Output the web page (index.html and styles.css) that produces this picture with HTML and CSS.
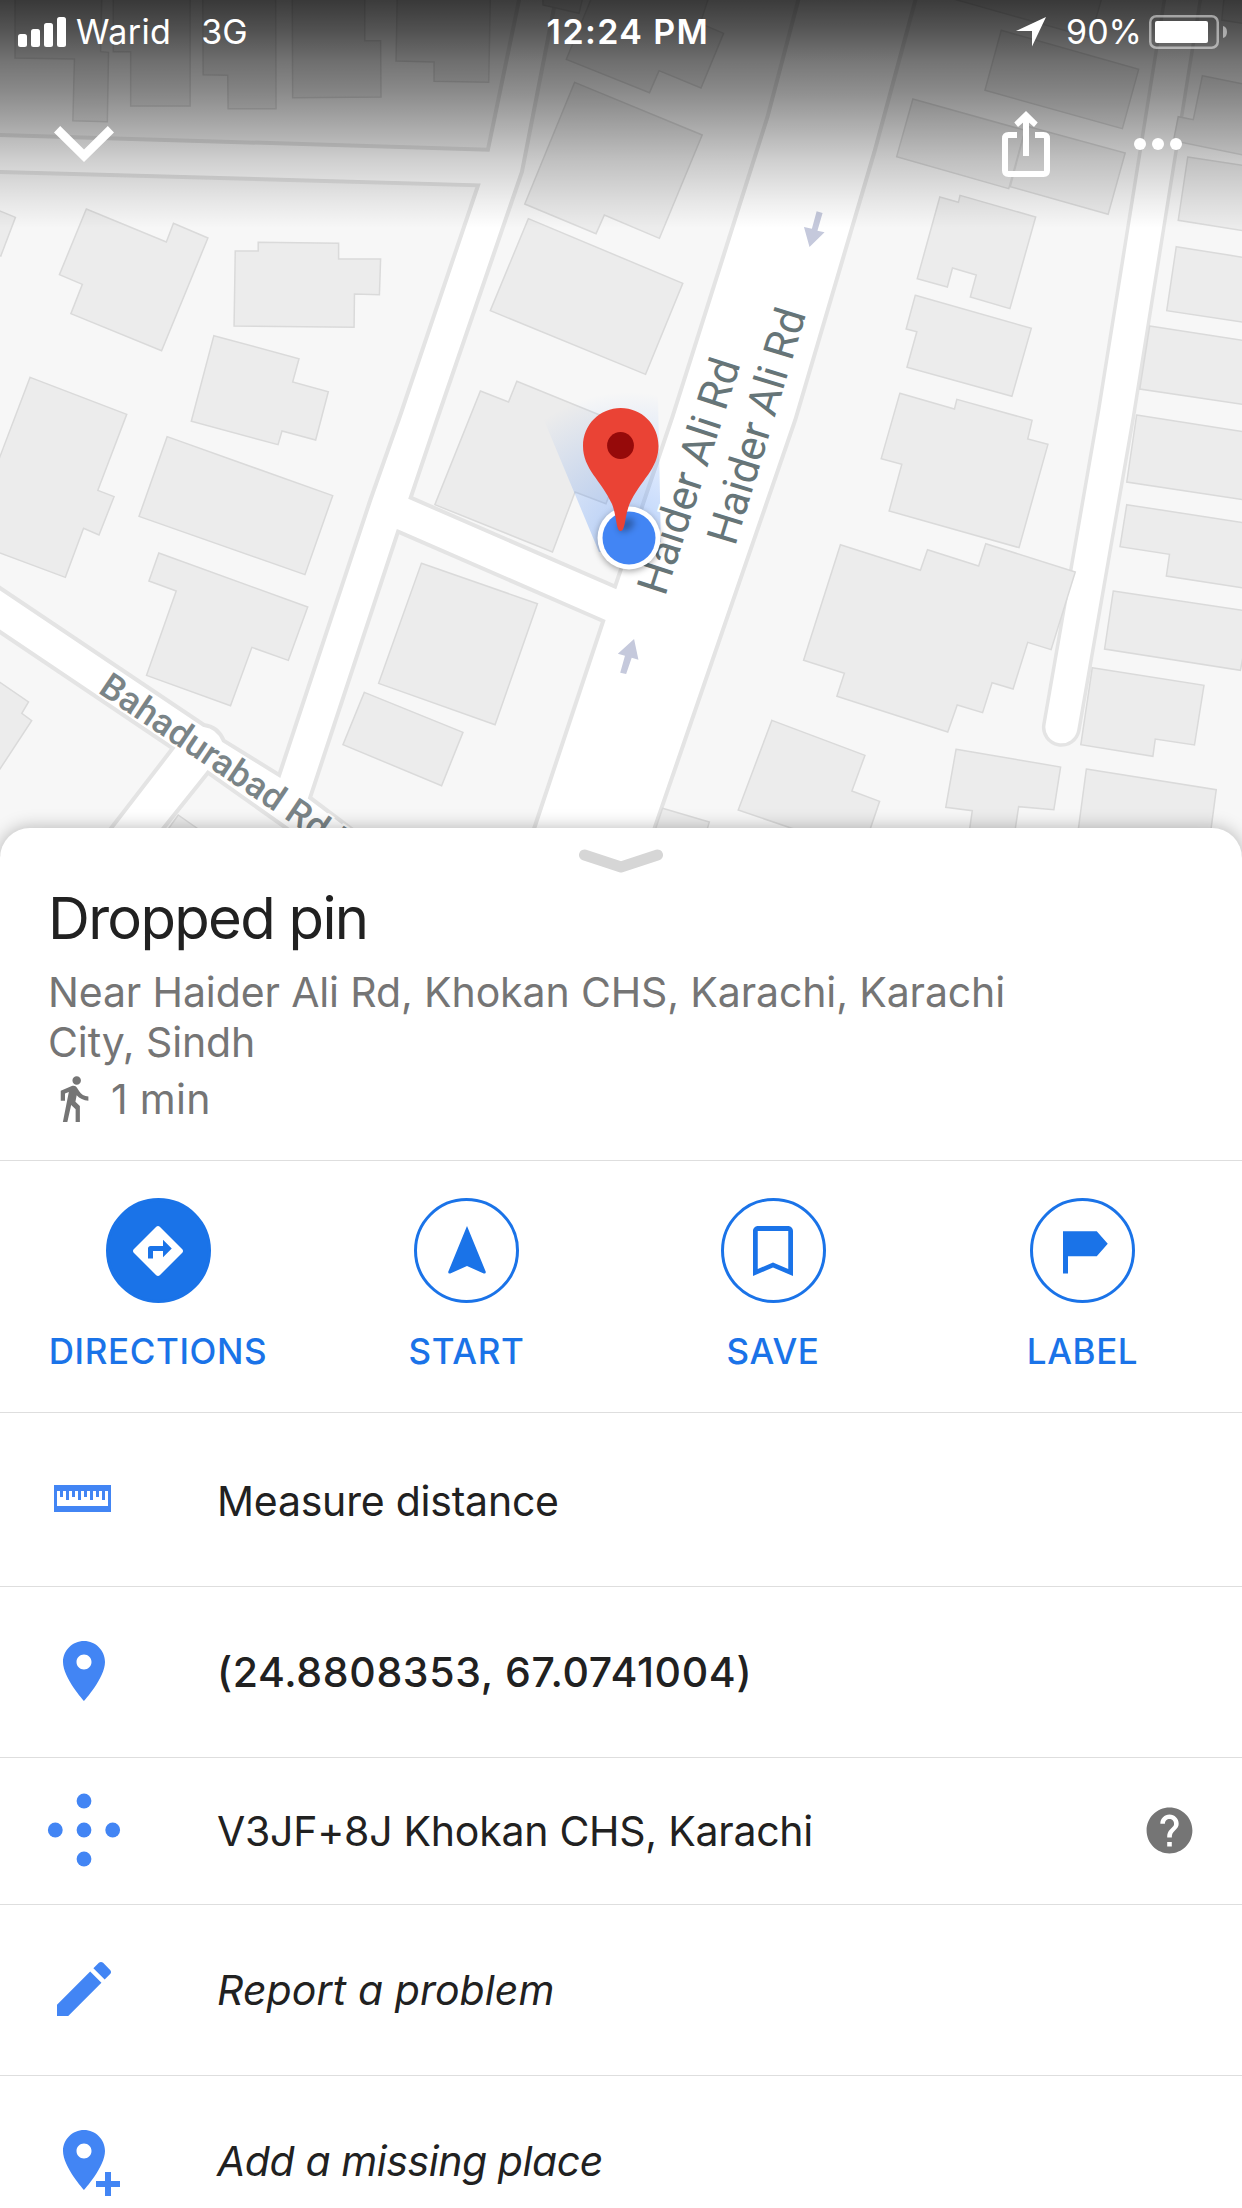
FILE: index.html
```html
<!DOCTYPE html>
<html lang="en">
<head>
<meta charset="utf-8">
<title>Dropped pin</title>
<link rel="stylesheet" href="styles.css">
</head>
<body>
<main class="screen">
  <section class="map">
    <svg class="map-base" viewBox="0 0 3136 2520" preserveAspectRatio="none" aria-hidden="true">
      <!-- city blocks -->
      <g class="block">
        <path d="M-20-20H1314L1232 449-20 404z"/>
        <path d="M-20 515L1207 556 1010 1248 935 1500 705 2325 565 2222Q550 2180 515 2175L-20 1748z"/>
        <path d="M1406-20L1318 515 1103 1260 1037 1493 1553 1760 1698 1250 1938 350 2020-20z"/>
        <path d="M1005 1595L1523 1863 1325 2570 980 2570 783 2393z"/>
        <path d="M-20 1880L436 2245 225 2570H-20z"/>
        <path d="M525 2318L825 2570H355z"/>
        <path d="M2316-20L2208 455 2008 1260 1628 2570H3200V-20z"/>
      </g>
      <path class="lane-edge" d="M2988-20L2818 1240 2680 2182"/>
      <path class="lane" d="M2988-20L2818 1240 2680 2182"/>
      <!-- buildings -->
      <g class="building">
        <path d="M38-10V174L188 177 184 362 271 365 274 157 254 155 257-10z"/>
        <path d="M286-10V155H330V318H480V-10z"/>
        <path d="M512-10L513 224 575 226 576 326H697L696-10z"/>
        <path d="M738-10L739 293 962 291 961 122H921V-10z"/>
        <path d="M1003-10L1000 183 1096 186V244L1234 247 1238-10z"/>
        <path d="M1371-10V15L1462 40 1472-10z"/>
        <path d="M1495-10L1430 178 1640 278 1664 212 1770 264 1827 100 1768 70 1790-10z"/>
        <path d="M1451 247L1773 405 1665 715 1526 645 1505 701 1325 612z"/>
        <path d="M1334 656L1724 850 1630 1123 1238 932z"/>
        <path d="M218 627L420 726 438 670 525 714 408 1052 179 941 208 853 150 824z"/>
        <path d="M-10 628L39 652 2 768-10 764z"/>
        <path d="M652 727L855 730V777H961L958 884 895 882 894 982 591 978 594 753H652z"/>
        <path d="M540 1007L755 1076 739 1146 829 1175 797 1320 712 1293 702 1334 483 1264z"/>
        <path d="M76 1132L320 1243 247 1471 288 1490 250 1605 211 1585 165 1732-20 1650V1432z"/>
        <path d="M422 1310L840 1487 770 1724 351 1549z"/>
        <path d="M401 1659L777 1821 728 1981 636 1942 582 2117 370 2026 445 1773 376 1743z"/>
        <path d="M1064 1690L1357 1811 1250 2174 956 2050z"/>
        <path d="M920 2077L1169 2197 1115 2357 866 2234z"/>
        <path d="M-20 2031L72 2106 55 2140 80 2162-20 2343z"/>
        <path d="M450 2445L540 2520H405z"/>
        <path d="M1213 1173L1284 1206 1305 1144 1601 1287 1530 1511 1452 1476 1395 1656 1098 1514z"/>
        <path d="M2405-4L2753 113 2783-10z"/>
        <path d="M2528 91L2875 208 2834 386 2487 271z"/>
        <path d="M2305 297L2588 391 2547 566 2264 470z"/>
        <path d="M2591 378L2841 459 2798 643 2551 560z"/>
        <path d="M2373 591L2420 607 2424 586 2615 651 2550 926 2450 891 2465 825 2405 804 2392 861 2316 836z"/>
        <path d="M2311 886L2604 985 2555 1189 2290 1102 2315 995 2288 987z"/>
        <path d="M2272 1180L2410 1227 2416 1198 2606 1261 2595 1317 2646 1333 2573 1643 2245 1533 2277 1393 2225 1376z"/>
        <path d="M2122 1634L2324 1711 2342 1649 2471 1698 2489 1631 2715 1716 2654 1949 2595 1927 2558 2067 2505 2048 2481 2138 2417 2115 2393 2196 2113 2089 2132 2020 2029 1981z"/>
        <path d="M1949 2161L2184 2266 2151 2373 2221 2404 2185 2530H2110L1864 2430z"/>
        <path d="M1673 2425L1791 2466 1775 2530H1643z"/>
        <path d="M2414 2248L2678 2301 2661 2429 2572 2420 2558 2530H2443L2455 2432 2388 2422z"/>
        <path d="M2743 2307L3071 2369 3053 2530H2718z"/>
        <path d="M2758 2003L3040 2056 3016 2235 2917 2217 2911 2269 2729 2234z"/>
        <path d="M2811 1773L3160 1835 3132 2011 2789 1947z"/>
        <path d="M2845 1514L3160 1572V1768L2945 1728 2953 1663 2828 1640z"/>
        <path d="M2870 1245L3160 1299V1503L2845 1446z"/>
        <path d="M2903 978L3160 1025V1217L2878 1167z"/>
        <path d="M2970 740L3160 776V970L2946 932z"/>
        <path d="M2999 471L3160 500V696L2975 661z"/>
        <path d="M3036 227L3160 257V470L2963 422 2975 350 3013 359z"/>
        <path d="M3091-10L3085 60 3160 74V-10z"/>
      </g>
      <!-- one-way arrows -->
      <path class="oneway" d="M2062 634L2077 639 2064 692 2082 697 2044 741 2030 681 2050 686z"/>
      <path class="oneway" d="M1601 1917L1612 1979 1595 1973 1581 2022 1566 2018 1578 1967 1560 1961z"/>
    </svg>
    <svg class="map-marks" viewBox="0 0 1242 840">
      <defs>
        <radialGradient id="beam" gradientUnits="userSpaceOnUse" cx="629" cy="538" r="146">
          <stop offset="0" stop-color="#4285f4" stop-opacity=".38"/>
          <stop offset=".5" stop-color="#4285f4" stop-opacity=".19"/>
          <stop offset="1" stop-color="#4285f4" stop-opacity="0"/>
        </radialGradient>
      </defs>
      <path fill="url(#beam)" d="M599 552L534 396Q596 366 658 396L661 548z"/>
      <text class="road-name" transform="translate(665 597) rotate(-72)" textLength="245">Haider Ali Rd</text>
      <text class="road-name" transform="translate(735 547) rotate(-73)" textLength="244">Haider Ali Rd</text>
      <text class="road-name road-name-small" transform="translate(97 692) rotate(34)" textLength="286">Bahadurabad Rd l</text>
      <circle class="me-ring" cx="629" cy="538" r="31.5"/>
      <circle cx="629" cy="538" r="26.5" fill="#4285f4"/>
      <ellipse class="pin-shadow" cx="626" cy="525" rx="9" ry="6" transform="rotate(-30 626 525)"/>
      <path fill="#ea4335" d="M620.7 408C600 408 583 424.500 583 446C583 469 601 480 612 504C617 517 616 531 620.700 531S624.500 517 629.500 504C640.500 480 658.500 469 658.500 446C658.500 424.500 641.500 408 620.700 408z"/>
      <circle cx="620.500" cy="445.500" r="13.400" fill="#960a0a"/>
    </svg>

    <div class="map-top">
      <div class="status">
        <div class="status-left">
          <svg class="signal" viewBox="0 0 48 30"><rect y="17" width="9" height="13" rx="2.500"/><rect x="13" y="12" width="9" height="18" rx="2.500"/><rect x="26" y="6" width="9" height="24" rx="2.500"/><rect x="39" width="9" height="30" rx="2.500"/></svg>
          <span class="carrier">Warid</span>
          <span class="network">3G</span>
        </div>
        <time class="clock">12:24 PM</time>
        <div class="status-right">
          <svg class="locate" viewBox="0 0 30 30"><path d="M30 0L16 29.500V14H0z"/></svg>
          <span class="percent">90%</span>
          <svg class="battery" viewBox="0 0 78 34"><rect class="shell" x="1.250" y="1.250" width="67.500" height="31.500" rx="6"/><rect x="6" y="6" width="53" height="22" rx="2"/><path opacity=".5" d="M74 11q4 1 4 6t-4 6z"/></svg>
        </div>
      </div>
      <nav class="tools">
        <svg class="collapse" viewBox="0 0 60 36"><path d="M0 6.500L6.200 0 30 23.500 53.800 0 60 6.500 30 36z"/></svg>
        <svg class="share" viewBox="0 0 48 66"><path class="line" d="M15 24H6.500Q3 24 3 27.500V59.500Q3 63 6.500 63H41.500Q45 63 45 59.500V27.500Q45 24 41.500 24H33M24 45V4"/><path d="M24 0L35.700 11.500 32 16 24 9 16 16 12.300 11.500z"/></svg>
        <svg class="more" viewBox="0 0 48 12"><circle cx="6" cy="6" r="6"/><circle cx="24" cy="6" r="6"/><circle cx="42" cy="6" r="6"/></svg>
      </nav>
    </div>
  </section>

  <section class="sheet">
    <svg class="handle" viewBox="0 0 84 24"><path d="M5.500 6L42 18 78.500 6"/></svg>
    <header class="place">
      <h1>Dropped pin</h1>
      <p class="address">Near Haider Ali Rd, Khokan CHS, Karachi, Karachi<br>City, Sindh</p>
      <p class="walk">
        <svg viewBox="0 0 24 24"><path d="M13.500 5.500c1.100 0 2-.9 2-2s-.9-2-2-2-2 .9-2 2 .9 2 2 2zM9.800 8.900L7 23h2.100l1.800-8 2.100 2v6h2v-7.500l-2.100-2 .6-3C14.800 12 16.800 13 19 13v-2c-1.900 0-3.500-1-4.300-2.400l-1-1.600c-.4-.6-1-1-1.700-1-.3 0-.5.1-.8.1L6 8.300V13h2V9.600l1.800-.7"/></svg>
        <span>1 min</span>
      </p>
    </header>

    <div class="actions">
      <div class="action">
        <span class="disc disc-filled"><svg viewBox="0 0 24 24"><path d="M21.710 11.290l-9-9c-.39-.39-1.020-.39-1.410 0l-9 9c-.39.39-.39 1.020 0 1.410l9 9c.39.39 1.020.39 1.410 0l9-9c.39-.38.39-1.010 0-1.410zM14 14.500V12h-4v3H8v-4c0-.55.45-1 1-1h5V7.500l3.500 3.500-3.500 3.500z"/></svg></span>
        <span class="action-name">DIRECTIONS</span>
      </div>
      <div class="action">
        <span class="disc"><svg viewBox="0 0 24 24"><path d="M12 2L4.500 20.290Q4.400 21.200 5.300 21L12 18l6.700 3Q19.600 21.200 19.500 20.290z"/></svg></span>
        <span class="action-name">START</span>
      </div>
      <div class="action">
        <span class="disc"><svg viewBox="0 0 24 24"><path fill-rule="evenodd" d="M18 2H6C4.900 2 4 2.900 4 4v18l8-3.400 8 3.400V4c0-1.100-.9-2-2-2zM18.100 19.200L12 16.600 5.900 19.200V4H18.100z"/></svg></span>
        <span class="action-name">SAVE</span>
      </div>
      <div class="action">
        <span class="disc"><svg viewBox="0 0 24 24"><path d="M4 4.100H17.500L21.900 9.100 17.500 14.100H6V21H4z"/></svg></span>
        <span class="action-name">LABEL</span>
      </div>
    </div>

    <ul class="rows">
      <li class="row row-measure">
        <svg class="row-icon" viewBox="0 0 72 72"><path fill-rule="evenodd" d="M6 22H63V49H6zM9 28V43H60V28H57V37H54V28H51V34H48V28H45V37H42V28H39V34H36V28H33V37H30V28H27V34H24V28H21V37H18V28H15V34H12V28z"/></svg>
        <span>Measure distance</span>
      </li>
      <li class="row row-coords">
        <svg class="row-icon" viewBox="0 0 24 24"><path d="M12 2C8.130 2 5 5.130 5 9c0 5.250 7 13 7 13s7-7.750 7-13c0-3.870-3.130-7-7-7zm0 9.500c-1.380 0-2.500-1.120-2.500-2.500s1.120-2.500 2.500-2.500 2.500 1.120 2.500 2.500-1.120 2.500-2.500 2.500z"/></svg>
        <span>(24.8808353, 67.0741004)</span>
      </li>
      <li class="row row-code">
        <svg class="row-icon" viewBox="0 0 72 72"><circle cx="36" cy="7" r="7.400"/><circle cx="7.300" cy="36" r="7.400"/><circle cx="36" cy="36" r="7.400"/><circle cx="64.700" cy="36" r="7.400"/><circle cx="36" cy="65" r="7.400"/></svg>
        <span>V3JF+8J Khokan CHS, Karachi</span>
        <svg class="help" viewBox="0 0 24 24"><path d="M12 2C6.480 2 2 6.480 2 12s4.480 10 10 10 10-4.480 10-10S17.520 2 12 2zm1 17h-2v-2h2v2zm2.070-7.750l-.9.920C13.450 12.900 13 13.500 13 15h-2v-.5c0-1.100.45-2.100 1.170-2.830l1.240-1.260c.37-.36.590-.86.590-1.410 0-1.100-.9-2-2-2s-2 .9-2 2H8c0-2.210 1.790-4 4-4s4 1.790 4 4c0 .88-.36 1.680-.93 2.250z"/></svg>
      </li>
      <li class="row row-report">
        <svg class="row-icon" viewBox="0 0 24 24"><path d="M3 17.250V21h3.750L17.810 9.940l-3.750-3.750L3 17.250zM20.710 7.040c.39-.39.39-1.020 0-1.410l-2.340-2.340c-.39-.39-1.020-.39-1.410 0l-1.830 1.830 3.750 3.750 1.830-1.830z"/></svg>
        <span>Report a problem</span>
      </li>
      <li class="row row-add">
        <svg class="row-icon" viewBox="0 0 24 24"><path d="M12 2C8.130 2 5 5.130 5 9c0 5.250 7 13 7 13s7-7.750 7-13c0-3.870-3.130-7-7-7zm0 9.500c-1.380 0-2.500-1.120-2.500-2.500s1.120-2.500 2.500-2.500 2.500 1.120 2.500 2.500-1.120 2.500-2.500 2.500z"/><path d="M19 16h2v3h3v2h-3v3h-2v-3h-3v-2h3z"/></svg>
        <span>Add a missing place</span>
      </li>
    </ul>
  </section>
</main>
</body>
</html>
```
FILE: styles.css
```css
* { box-sizing: border-box; margin: 0; padding: 0; }

body {
  background: #fff;
  font-family: Inter, "Liberation Sans", sans-serif;
  color: #212121;
}

svg { display: block; flex: none; }

.screen {
  display: flex;
  flex-direction: column;
  width: 1242px;
  height: 2208px;
  overflow: hidden;
}

/* Map */
.map {
  position: relative;
  flex: none;
  height: 828px;
  background: #fff;
}
/* the drawings run a little below the sheet's rounded top edge */
.map-base,
.map-marks {
  position: absolute;
  left: 0;
  top: 0;
  width: 1242px;
  height: 840px;
}
.map-base { height: 840px; overflow: visible; clip-path: inset(0 0 -20px 0); }
.map-base path { vector-effect: non-scaling-stroke; }
.block { fill: #f7f7f7; stroke: #e4e4e4; stroke-width: 4; }
.building { fill: #ececec; stroke: #dadada; stroke-width: 1.5; }
.lane-edge { fill: none; stroke: #e4e4e4; stroke-width: 39; stroke-linecap: round; }
.lane { fill: none; stroke: #fff; stroke-width: 32; stroke-linecap: round; }
.oneway { fill: #c5c9dc; }
.road-name {
  font-family: Roboto, sans-serif;
  font-size: 43px;
  fill: #667578;
  stroke: #fff;
  stroke-width: 4px;
  paint-order: stroke;
}
.road-name-small { font-size: 36px; font-weight: 500; fill: #7a8487; }
.me-ring { fill: #fff; filter: drop-shadow(0 2px 3px rgba(0, 0, 0, .35)); }
.pin-shadow { fill: rgba(0, 0, 0, .3); filter: blur(3px); }

.map-top {
  position: relative;
  height: 228px;
  color: #fff;
  background: linear-gradient(rgba(0,0,0,.76) 0, rgba(0,0,0,.66) 30px, rgba(0,0,0,.53) 62px, rgba(0,0,0,.44) 92px, rgba(0,0,0,.32) 124px, rgba(0,0,0,.19) 160px, rgba(0,0,0,.07) 200px, rgba(0,0,0,0) 228px);
}
.map-top svg { fill: #fff; }
.status {
  display: grid;
  grid-template-columns: 1fr auto 1fr;
  align-items: center;
  height: 63px;
  padding: 0 15px 0 18px;
  font-size: 34px;
}
.status-left,
.status-right { display: flex; align-items: center; }
.status-right { justify-content: flex-end; }
.signal { width: 48px; height: 30px; margin-right: 10px; }
.carrier { margin-right: 30px; letter-spacing: .4px; }
.clock { font-weight: 600; letter-spacing: 1.4px; padding-left: 11px; }
.locate { width: 30px; height: 30px; margin-right: 20px; }
.percent { margin-right: 7px; }
.battery { width: 78px; height: 34px; }
.battery .shell { fill: none; stroke: #fff; stroke-opacity: .5; stroke-width: 2.5; }
.tools {
  display: flex;
  align-items: center;
  height: 162px;
  padding: 0 60px 0 54px;
}
.collapse { width: 60px; height: 36px; }
.share { width: 48px; height: 66px; margin: 0 84px 0 auto; }
.share .line { fill: none; stroke: #fff; stroke-width: 6; }
.more { width: 48px; height: 12px; }

/* Bottom sheet */
.sheet {
  position: relative;
  flex: 1;
  background: #fff;
  border-radius: 30px 30px 0 0;
  box-shadow: 0 0 18px rgba(0, 0, 0, .28);
}
.handle { width: 84px; height: 24px; margin: 0 auto; position: relative; top: 21px; }
.handle path { fill: none; stroke: #d6d6d6; stroke-width: 11; stroke-linecap: round; stroke-linejoin: round; }

.place {
  height: 309px;
  padding: 31px 48px 0;
  border-bottom: 1px solid #dedede;
}
h1 { font-size: 58px; font-weight: 400; line-height: 70px; letter-spacing: -1.7px; }
.address { margin-top: 14px; font-size: 41px; line-height: 50px; letter-spacing: -.12px; color: #757575; }
.walk { display: flex; align-items: center; height: 52px; margin-top: 5px; font-size: 41px; letter-spacing: .3px; color: #757575; }
.walk svg { width: 51px; height: 51px; margin-right: 12px; fill: #757575; }
.walk span { padding-top: 2px; }

.actions {
  display: grid;
  grid-template-columns: 308px 309px 304px 315px;
  height: 252px;
  padding: 37px 0 0 4px;
  border-bottom: 1px solid #dedede;
}
.action {
  display: flex;
  flex-direction: column;
  align-items: center;
  gap: 26px;
  color: #1a73e8;
}
.disc {
  display: grid;
  place-items: center;
  width: 105px;
  height: 105px;
  border: 3px solid #1a73e8;
  border-radius: 50%;
}
.disc svg { width: 60px; height: 60px; fill: #1a73e8; }
.disc-filled { background: #1a73e8; }
.disc-filled svg { fill: #fff; }
.action-name { font-size: 35px; font-weight: 500; line-height: 44px; letter-spacing: .6px; }

.rows { list-style: none; }
.row {
  display: flex;
  align-items: center;
  height: 171px;
  padding: 0 45px 0 48px;
  border-bottom: 1px solid #dedede;
  font-size: 41px;
}
.row-icon { width: 72px; height: 72px; margin: 0 97px 2px 0; fill: #4285f4; overflow: visible; }
.row-measure { height: 174px; letter-spacing: -.22px; }
.row-measure span { padding-top: 3px; }
.row-coords { font-weight: 500; letter-spacing: .66px; }
.row-code { height: 147px; letter-spacing: -.26px; }
.row-report,
.row-add { font-style: italic; }
.row-report { letter-spacing: .1px; }
.row-add { letter-spacing: -.42px; }
.help { width: 55px; height: 55px; margin: 0 0 2px auto; fill: #757575; }
```
